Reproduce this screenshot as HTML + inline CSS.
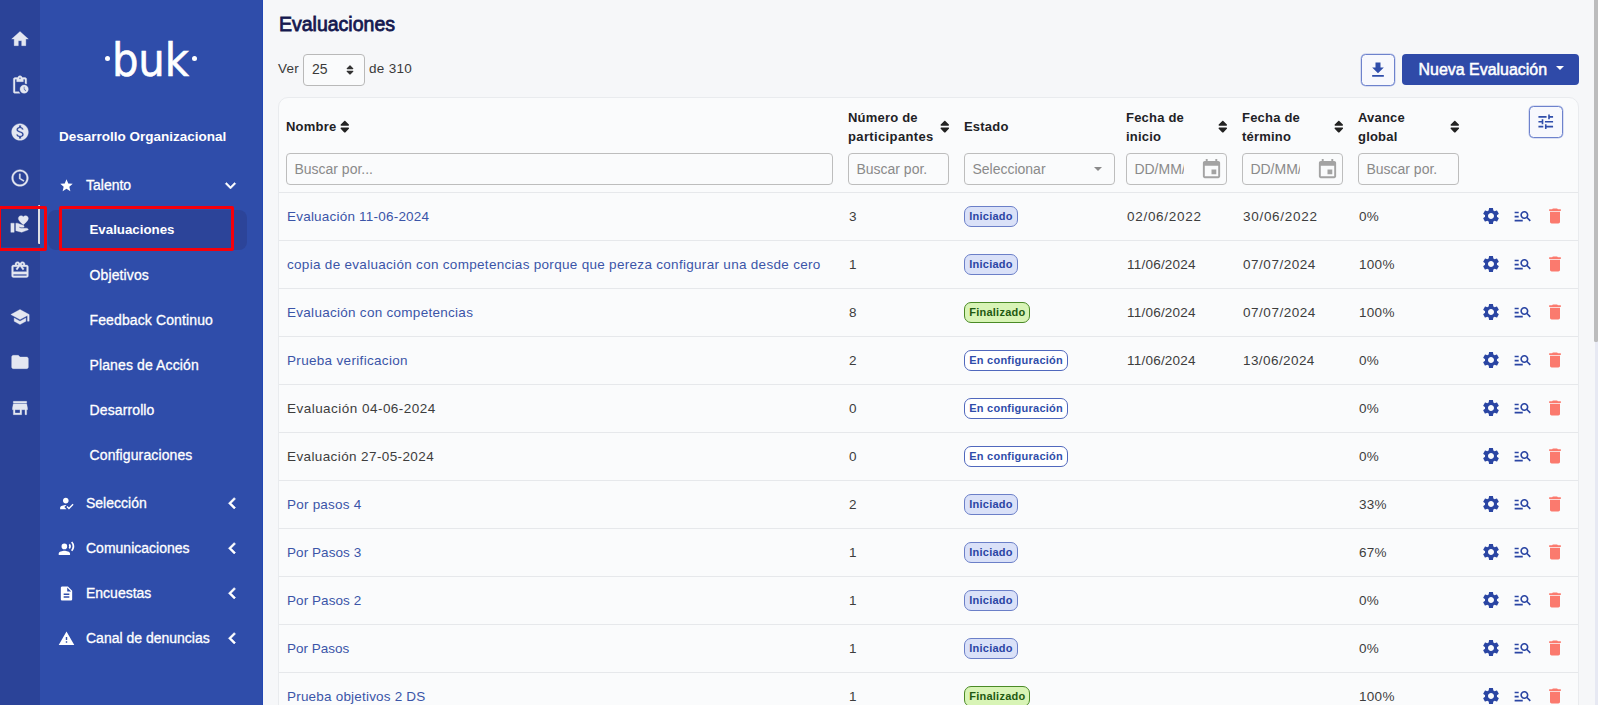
<!DOCTYPE html>
<html lang="es">
<head>
<meta charset="utf-8">
<title>Evaluaciones</title>
<style>
*{box-sizing:border-box;margin:0;padding:0}
html,body{width:1600px;height:705px;overflow:hidden}
body{font-family:"Liberation Sans",sans-serif;background:#f6f7f9;color:#333;position:relative;font-size:13px}
.abs{position:absolute}
#rail{left:0;top:0;width:40px;height:705px;background:#2b4398}
#side{left:40px;top:0;width:223px;height:705px;background:#2f4daa;box-shadow:inset -1px 0 #2347b3}
svg{position:absolute}
#rail svg{fill:#e4e7f1}
.redbox{border:3.4px solid #f6000b;border-radius:2px}
#side .t{position:absolute;color:#fff;white-space:nowrap;font-size:14px;line-height:16px;-webkit-text-stroke:.3px #fff}
#side .s{left:49.5px;letter-spacing:.12px}
#side .m{left:46px}
#side svg{fill:#fff}
.logo{position:absolute;left:64.6px;top:30px;width:92.8px;height:56px;color:#fff}
.logo span{position:absolute;left:7.3px;top:2px;font-family:"DejaVu Sans Condensed","DejaVu Sans","Liberation Sans",sans-serif;font-size:46.5px;line-height:56px;letter-spacing:-.1px;-webkit-text-stroke:.55px #fff}
.logo .dot{position:absolute;top:25.6px;width:5.4px;height:5.4px;border-radius:3px;background:#fff}
#main{left:263px;top:0;width:1337px;height:705px}
h1{position:absolute;left:15.6px;top:11px;font-size:20px;line-height:26px;font-weight:normal;color:#15194f;-webkit-text-stroke:.8px #15194f;letter-spacing:0;white-space:nowrap;transform:scaleX(.975);transform-origin:0 0}
.lbl{font-size:13.5px;letter-spacing:.3px;line-height:16px;color:#3a3a3a;white-space:nowrap}
.sel{border:1px solid #b9b9b9;border-radius:4px;background:#fafbfc}
.sel span{position:absolute;left:8px;top:6px;font-size:14px;line-height:16px;color:#3a3a3a}
.sel svg{left:41.8px;top:9px;width:8px;height:12px}
.btn-o{border:1px solid #6d82cc;border-radius:4.5px;background:#f7f8fd;box-shadow:0 0 0 .5px #b9c3ea}
.btn-p{background:#2f4aa8;border-radius:4px;color:#fff}
.btn-p span{position:absolute;left:16.6px;top:6px;font-size:15.95px;line-height:19px;white-space:nowrap;-webkit-text-stroke:.5px #fff}
.btn-p i{position:absolute;left:153.5px;top:12.5px;width:0;height:0;border-left:4px solid transparent;border-right:4px solid transparent;border-top:4px solid #fff}
.card{position:absolute;left:278px;top:97px;width:1301px;height:640px;background:#fafbfc;border:1px solid #e9ebee;border-radius:10px;overflow:hidden}
.ci{position:absolute;left:1px;top:0;right:0;bottom:0}
.row{position:absolute;left:0;width:1298px;height:47px}
.row::before{content:"";position:absolute;left:-1px;right:0;top:-1px;height:1px;background:#e6e8eb}
.row span,.row a{position:absolute;top:16px;line-height:16px;font-size:13.5px;letter-spacing:.3px;white-space:nowrap;color:#3d3d3d}
.row a{color:#3b55a8;text-decoration:none}
.c1{left:7px}.c2{left:569px}.c3{left:685px}.c4{left:847px}.c5{left:963px}.c6{left:1079px}
.row .bd{left:684.2px;top:13.3px;height:20.6px;line-height:18.7px;font-size:11px;letter-spacing:.25px;font-weight:bold;border:1px solid #6b7fc8;border-radius:7px;padding:0 4px;color:#2b45a4;background:#dae1f8}
.row .bd.fin{background:#d8f4b6;border-color:#4a8a26;color:#1f5a12}
.row .bd.cfg{background:#fff;border-color:#5068bd;color:#2f4daa}
.th{position:absolute;font-weight:bold;font-size:13px;letter-spacing:.2px;line-height:18.5px;color:#1e2226;white-space:nowrap}
.inp{position:absolute;top:55px;height:32px;border:1px solid #bdbdbd;border-radius:4px;background:#fafbfc;color:#8a8a8a;font-size:14px;line-height:30px;padding-left:7.4px;white-space:nowrap;overflow:hidden}
.inp .clip{display:inline-block;width:50px;overflow:hidden;vertical-align:top}
.inp .caret{position:absolute;right:12.5px;top:13px;width:0;height:0;border-left:4px solid transparent;border-right:4px solid transparent;border-top:4px solid #8a8a8a}
.sort{width:9.6px;height:15.3px}
</style>
</head>
<body>
<div id="rail" class="abs">
<div class="abs" style="left:0;top:209px;width:40px;height:38px;background:#273c8b"></div>
<div class="abs" style="left:38px;top:205px;width:2.5px;height:39px;background:#dfe0e4;border-radius:1px"></div>
<svg viewBox="0 0 24 24" style="left:10px;top:28.8px;width:20px;height:20px" stroke="#e4e7f1" stroke-width=".4"><path d="M10 20v-6h4v6h5v-8h3L12 3 2 12h3v8z"/></svg>
<svg viewBox="0 0 24 24" style="left:10px;top:75px;width:20px;height:20px" stroke="#e4e7f1" stroke-width=".4"><path d="M17 12c-2.76 0-5 2.24-5 5s2.24 5 5 5 5-2.24 5-5-2.24-5-5-5zm1.65 7.35L16.5 17.2V14h1v2.79l1.85 1.85-.7.71zM18 3h-3.18C14.4 1.84 13.3 1 12 1s-2.4.84-2.82 2H6c-1.1 0-2 .9-2 2v15c0 1.1.9 2 2 2h6.11c-.59-.57-1.07-1.25-1.42-2H6V5h2v3h8V5h2v5.08c.71.1 1.38.31 2 .6V5c0-1.1-.9-2-2-2zm-6 2c-.55 0-1-.45-1-1s.45-1 1-1 1 .45 1 1-.45 1-1 1z"/></svg>
<svg viewBox="0 0 24 24" style="left:10px;top:121.5px;width:20px;height:20px" stroke="#e4e7f1" stroke-width=".4"><path d="M12 2C6.48 2 2 6.48 2 12s4.48 10 10 10 10-4.48 10-10S17.52 2 12 2zm1.41 16.09V20h-2.67v-1.93c-1.71-.36-3.16-1.46-3.27-3.4h1.96c.1 1.05.82 1.87 2.65 1.87 1.96 0 2.4-.98 2.4-1.59 0-.83-.44-1.61-2.67-2.14-2.48-.6-4.18-1.62-4.18-3.67 0-1.72 1.39-2.84 3.11-3.21V4h2.67v1.95c1.86.45 2.79 1.86 2.85 3.39H14.3c-.05-1.11-.64-1.87-2.22-1.87-1.5 0-2.4.68-2.4 1.64 0 .84.65 1.39 2.67 1.91s4.18 1.39 4.18 3.91c-.01 1.83-1.38 2.83-3.12 3.16z"/></svg>
<svg viewBox="0 0 24 24" style="left:10px;top:168px;width:20px;height:20px" stroke="#e4e7f1" stroke-width=".4"><path d="M11.99 2C6.47 2 2 6.48 2 12s4.47 10 9.99 10C17.52 22 22 17.52 22 12S17.52 2 11.99 2zM12 20c-4.42 0-8-3.58-8-8s3.58-8 8-8 8 3.58 8 8-3.58 8-8 8zm.5-13H11v6l5.25 3.15.75-1.23-4.5-2.67z"/></svg>
<svg viewBox="0 0 24 24" style="left:10px;top:213.9px;width:20px;height:20px" stroke="#e4e7f1" stroke-width=".4"><path d="M1 11h4v11H1zM16 3.25C16.65 2.49 17.66 2 18.7 2 20.55 2 22 3.45 22 5.3c0 2.27-2.91 4.9-6 7.7-3.09-2.81-6-5.44-6-7.7C10 3.45 11.45 2 13.3 2c1.04 0 2.05.49 2.7 1.25zM20 17h-7l-2.09-.73.33-.94L13 16h2.82c.65 0 1.18-.53 1.18-1.18 0-.49-.31-.93-.77-1.11L8.97 11H7v9.02L14 22l8.01-3c-.01-1.1-.9-2-2.01-2z"/></svg>
<svg viewBox="0 0 24 24" style="left:10px;top:260.4px;width:20px;height:20px" stroke="#e4e7f1" stroke-width=".4"><path d="M20 6h-2.18c.11-.31.18-.65.18-1 0-1.66-1.34-3-3-3-1.05 0-1.96.54-2.5 1.35l-.5.67-.5-.68C10.96 2.54 10.05 2 9 2 7.34 2 6 3.34 6 5c0 .35.07.69.18 1H4c-1.11 0-1.99.89-1.99 2L2 19c0 1.11.89 2 2 2h16c1.11 0 2-.89 2-2V8c0-1.11-.89-2-2-2zm-5-2c.55 0 1 .45 1 1s-.45 1-1 1-1-.45-1-1 .45-1 1-1zM9 4c.55 0 1 .45 1 1s-.45 1-1 1-1-.45-1-1 .45-1 1-1zm11 15H4v-2h16v2zm0-5H4V8h5.08L7 10.83 8.62 12 11 8.76l1-1.36 1 1.36L15.38 12 17 10.83 14.92 8H20v6z"/></svg>
<svg viewBox="0 0 24 24" style="left:10px;top:306.7px;width:20px;height:20px" stroke="#e4e7f1" stroke-width=".4"><path d="M5 13.18v4L12 21l7-3.82v-4L12 17l-7-3.82zM12 3L1 9l11 6 9-4.91V17h2V9L12 3z"/></svg>
<svg viewBox="0 0 24 24" style="left:10px;top:352.1px;width:20px;height:20px" stroke="#e4e7f1" stroke-width=".4"><path d="M10 4H4c-1.1 0-1.99.9-1.99 2L2 18c0 1.1.9 2 2 2h16c1.1 0 2-.9 2-2V8c0-1.1-.9-2-2-2h-8l-2-2z"/></svg>
<svg viewBox="0 0 24 24" style="left:10px;top:398px;width:20px;height:20px" stroke="#e4e7f1" stroke-width=".4"><path d="M20 4H4v2h16V4zm1 10v-2l-1-5H4l-1 5v2h1v6h10v-6h4v6h2v-6h1zm-9 4H6v-4h6v4z"/></svg>
</div>
<div id="side" class="abs">
<div class="abs" style="left:8px;top:210px;width:199px;height:40px;background:#2c4499;border-radius:8px"></div>
<div class="logo"><i class="dot" style="left:0"></i><span>buk</span><i class="dot" style="right:0"></i></div>
<div class="t" style="left:19px;top:128.7px;font-weight:bold;font-size:13.5px;-webkit-text-stroke:0">Desarrollo Organizacional</div>
<svg viewBox="0 0 24 24" style="left:19.3px;top:178.3px;width:15px;height:15px"><path d="M12 17.27L18.18 21l-1.64-7.03L22 9.24l-7.19-.61L12 2 9.19 8.63 2 9.24l5.46 4.73L5.82 21z"/></svg>
<div class="t m" style="top:177px">Talento</div>
<svg viewBox="0 0 24 24" style="left:180.4px;top:174.6px;width:21px;height:21px" stroke="#fff" stroke-width=".5"><path d="M16.59 8.59L12 13.17 7.41 8.59 6 10l6 6 6-6z"/></svg>
<div class="t s" style="top:221.8px;font-weight:bold;font-size:13.3px;letter-spacing:0;-webkit-text-stroke:0">Evaluaciones</div>
<div class="t s" style="top:266.8px">Objetivos</div>
<div class="t s" style="top:311.8px">Feedback Continuo</div>
<div class="t s" style="top:356.8px">Planes de Acción</div>
<div class="t s" style="top:401.8px">Desarrollo</div>
<div class="t s" style="top:446.8px">Configuraciones</div>
<svg viewBox="0 0 24 24" style="left:18px;top:494.5px;width:17px;height:17px"><path d="M9 17l3-2.94c-.39-.04-.68-.06-1-.06-2.67 0-8 1.34-8 4v2h9l-3-3zm2-5c2.21 0 4-1.79 4-4s-1.790-4-4-4-4 1.79-4 4 1.79 4 4 4m4.47 8.5L12 17l1.4-1.41 2.07 2.080 5.130-5.170 1.400 1.410-6.530 6.590z"/></svg>
<div class="t m" style="top:495px">Selección</div>
<svg viewBox="0 0 24 24" style="left:180.7px;top:491.75px;width:22.5px;height:22.5px" stroke="#fff" stroke-width=".7"><path d="M15.41 7.41L14 6l-6 6 6 6 1.41-1.41L10.83 12z"/></svg>
<svg viewBox="0 0 24 24" style="left:18px;top:539.5px;width:17px;height:17px"><path d="M5 9a4 4 0 1 0 8 0a4 4 0 1 0 -8 0M9 15c-2.67 0-8 1.34-8 4v2h16v-2c0-2.66-5.33-4-8-4zm7.760-9.640l-1.680 1.690c.84 1.180.84 2.710 0 3.890l1.680 1.690c2.020-2.020 2.020-5.070 0-7.270zM20.070 2l-1.630 1.630c2.770 3.020 2.770 7.560 0 10.740L20.070 16c3.900-3.890 3.910-9.950 0-14z"/></svg>
<div class="t m" style="top:540px">Comunicaciones</div>
<svg viewBox="0 0 24 24" style="left:180.7px;top:536.75px;width:22.5px;height:22.5px" stroke="#fff" stroke-width=".7"><path d="M15.41 7.41L14 6l-6 6 6 6 1.41-1.41L10.83 12z"/></svg>
<svg viewBox="0 0 24 24" style="left:18px;top:584.5px;width:17px;height:17px"><path d="M14 2H6c-1.1 0-1.99.9-1.99 2L4 20c0 1.1.89 2 1.990 2H18c1.1 0 2-.9 2-2V8l-6-6zm2 16H8v-2h8v2zm0-4H8v-2h8v2zm-3-5V3.5L18.5 9H13z"/></svg>
<div class="t m" style="top:585px">Encuestas</div>
<svg viewBox="0 0 24 24" style="left:180.7px;top:581.75px;width:22.5px;height:22.5px" stroke="#fff" stroke-width=".7"><path d="M15.41 7.41L14 6l-6 6 6 6 1.41-1.41L10.83 12z"/></svg>
<svg viewBox="0 0 24 24" style="left:18px;top:629.5px;width:17px;height:17px"><path d="M1 21h22L12 2 1 21zm12-3h-2v-2h2v2zm0-4h-2v-4h2v4z"/></svg>
<div class="t m" style="top:630px">Canal de denuncias</div>
<svg viewBox="0 0 24 24" style="left:180.7px;top:626.75px;width:22.5px;height:22.5px" stroke="#fff" stroke-width=".7"><path d="M15.41 7.41L14 6l-6 6 6 6 1.41-1.41L10.83 12z"/></svg>
</div>
<div class="abs redbox" style="left:-2.2px;top:205.7px;width:48.8px;height:45px"></div>
<div class="abs redbox" style="left:59.4px;top:205.8px;width:174.8px;height:45px"></div>
<div id="main" class="abs">
<h1>Evaluaciones</h1>
<div class="abs lbl" style="left:15px;top:61px">Ver</div>
<div class="abs sel" style="left:40px;top:54px;width:62px;height:32px"><span>25</span><svg viewBox="0 0 320 512" fill="#333"><path d="M41 288h238c21.4 0 32.1 25.9 17 41L177 448c-9.4 9.4-24.6 9.4-33.900 0L24 329c-15.1-15.1-4.4-41 17-41zm255-105L177 64c-9.4-9.4-24.6-9.400-33.900 0L24 183c-15.100 15.100-4.400 41 17 41h238c21.400 0 32.100-25.900 17-41z"/></svg></div>
<div class="abs lbl" style="left:106px;top:61px">de 310</div>
<div class="abs btn-o" style="left:1098px;top:54px;width:34px;height:32px"><svg viewBox="0 0 24 24" style="left:6.3px;top:4.5px;width:20px;height:20px" fill="#2f4daa"><path d="M19 9h-4V3H9v6H5l7 7 7-7zM5 18v2h14v-2H5z"/></svg></div>
<div class="abs btn-p" style="left:1139px;top:53.6px;width:177px;height:31.5px"><span>Nueva Evaluación</span><i></i></div>
</div>
<div class="card" id="card"><div class="ci">
<div class="th" style="left:6px;top:20px">Nombre</div><svg class="sort" viewBox="0 0 320 512" style="left:60.3px;top:21.05px" fill="#222"><path d="M41 288h238c21.4 0 32.1 25.9 17 41L177 448c-9.4 9.4-24.6 9.4-33.900 0L24 329c-15.1-15.1-4.4-41 17-41zm255-105L177 64c-9.4-9.4-24.6-9.400-33.900 0L24 183c-15.100 15.100-4.400 41 17 41h238c21.400 0 32.100-25.900 17-41z"/></svg>
<div class="th" style="left:568px;top:11px">Número de<br><span style="letter-spacing:.37px">participantes</span></div><svg class="sort" viewBox="0 0 320 512" style="left:659.8px;top:20.85px" fill="#222"><path d="M41 288h238c21.4 0 32.1 25.9 17 41L177 448c-9.4 9.4-24.6 9.4-33.900 0L24 329c-15.1-15.1-4.4-41 17-41zm255-105L177 64c-9.4-9.4-24.6-9.400-33.900 0L24 183c-15.100 15.100-4.400 41 17 41h238c21.400 0 32.100-25.900 17-41z"/></svg>
<div class="th" style="left:684px;top:20px">Estado</div>
<div class="th" style="left:846px;top:11px">Fecha de<br>inicio</div><svg class="sort" viewBox="0 0 320 512" style="left:938.1px;top:20.85px" fill="#222"><path d="M41 288h238c21.4 0 32.1 25.9 17 41L177 448c-9.4 9.4-24.6 9.4-33.900 0L24 329c-15.1-15.1-4.4-41 17-41zm255-105L177 64c-9.4-9.4-24.6-9.400-33.900 0L24 183c-15.100 15.100-4.400 41 17 41h238c21.400 0 32.100-25.900 17-41z"/></svg>
<div class="th" style="left:962px;top:11px">Fecha de<br>término</div><svg class="sort" viewBox="0 0 320 512" style="left:1053.7px;top:20.85px" fill="#222"><path d="M41 288h238c21.4 0 32.1 25.9 17 41L177 448c-9.4 9.4-24.6 9.4-33.900 0L24 329c-15.1-15.1-4.4-41 17-41zm255-105L177 64c-9.4-9.4-24.6-9.400-33.900 0L24 183c-15.100 15.100-4.400 41 17 41h238c21.400 0 32.100-25.900 17-41z"/></svg>
<div class="th" style="left:1078px;top:11px">Avance<br>global</div><svg class="sort" viewBox="0 0 320 512" style="left:1169.8px;top:20.85px" fill="#222"><path d="M41 288h238c21.4 0 32.1 25.9 17 41L177 448c-9.4 9.4-24.6 9.4-33.900 0L24 329c-15.1-15.1-4.4-41 17-41zm255-105L177 64c-9.4-9.4-24.6-9.400-33.900 0L24 183c-15.100 15.100-4.400 41 17 41h238c21.400 0 32.100-25.900 17-41z"/></svg>
<div class="abs btn-o" style="left:1249px;top:8px;width:34px;height:32px"><svg viewBox="0 0 24 24" style="left:5.9px;top:4.7px;width:19.5px;height:19.5px" fill="#2f4daa"><path d="M3 17v2h6v-2H3zM3 5v2h10V5H3zm10 16v-2h8v-2h-8v-2h-2v6h2zM7 9v2H3v2h4v2h2V9H7zm14 4v-2H11v2h10zm-6-4h2V7h4V5h-4V3h-2v6z"/></svg></div>
<div class="inp" style="left:6px;width:547px">Buscar por...</div>
<div class="inp" style="left:568px;width:101px">Buscar por.</div>
<div class="inp" style="left:684px;width:151px">Seleccionar<i class="caret"></i></div>
<div class="inp" style="left:846px;width:101px"><span class="clip">DD/MM/AAAA</span><svg viewBox="0 0 24 24" style="left:72.8px;top:3.6px;width:23px;height:23px" fill="#a3a3a3"><path d="M17 12h-5v5h5v-5zM16 1v2H8V1H6v2H5c-1.11 0-1.99.9-1.99 2L3 19c0 1.1.89 2 2 2h14c1.1 0 2-.9 2-2V5c0-1.1-.9-2-2-2h-1V1h-2zm3 18H5V8h14v11z"/></svg></div>
<div class="inp" style="left:962px;width:101px"><span class="clip">DD/MM/AAAA</span><svg viewBox="0 0 24 24" style="left:72.8px;top:3.6px;width:23px;height:23px" fill="#a3a3a3"><path d="M17 12h-5v5h5v-5zM16 1v2H8V1H6v2H5c-1.11 0-1.99.9-1.99 2L3 19c0 1.1.89 2 2 2h14c1.1 0 2-.9 2-2V5c0-1.1-.9-2-2-2h-1V1h-2zm3 18H5V8h14v11z"/></svg></div>
<div class="inp" style="left:1078px;width:101px">Buscar por.</div>
<div class="row" style="top:95px"><a class="c1" style="letter-spacing:0.21px">Evaluación 11-06-2024</a><span class="c2">3</span><span class="c3 bd ini">Iniciado</span><span class="c4" style="letter-spacing:0.71px">02/06/2022</span><span class="c5" style="letter-spacing:0.71px">30/06/2022</span><span class="c6">0%</span><svg viewBox="0 0 24 24" style="left:1201.2px;top:13px;width:20px;height:20px" fill="#2a45a3"><path d="M19.14 12.94c.04-.3.06-.61.06-.94 0-.32-.02-.64-.07-.94l2.030-1.580c.18-.14.23-.41.12-.61l-1.920-3.320c-.12-.22-.37-.29-.59-.22l-2.390.96c-.5-.38-1.030-.7-1.620-.94l-.36-2.540c-.04-.24-.24-.41-.48-.41h-3.840c-.24 0-.43.17-.47.41l-.36 2.540c-.59.24-1.130.57-1.620.94l-2.390-.96c-.22-.08-.47 0-.59.22L2.740 8.870c-.12.21-.08.47.12.61l2.030 1.580c-.05.3-.09.63-.09.94s.02.64.07.94l-2.030 1.580c-.18.14-.23.41-.12.61l1.920 3.320c.12.22.37.29.59.22l2.390-.96c.5.38 1.030.7 1.620.94l.36 2.540c.05.24.24.41.48.41h3.840c.24 0 .44-.17.47-.41l.36-2.540c.59-.24 1.130-.56 1.620-.94l2.390.96c.22.08.47 0 .59-.22l1.920-3.320c.12-.22.07-.47-.12-.61l-2.010-1.580zM12 15.600c-1.980 0-3.600-1.620-3.600-3.600s1.620-3.600 3.600-3.600 3.600 1.620 3.600 3.600-1.620 3.600-3.600 3.600z"/></svg><svg viewBox="0 0 24 24" style="left:1233.1px;top:13.4px;width:19.5px;height:19.5px" fill="#2a45a3"><path d="M7 9H2V7h5v2zm0 3H2v2h5v-2zm13.590 7l-3.830-3.830c-.8.520-1.740.83-2.760.83-2.760 0-5-2.240-5-5s2.240-5 5-5 5 2.240 5 5c0 1.020-.31 1.960-.83 2.750L22 17.590 20.590 19zM17 11c0-1.650-1.350-3-3-3s-3 1.350-3 3 1.350 3 3 3 3-1.350 3-3zM2 19h10v-2H2v2z"/></svg><svg viewBox="0 0 24 24" style="left:1265px;top:13.2px;width:20px;height:20px" fill="#fb7a6e"><path d="M6 19c0 1.1.9 2 2 2h8c1.1 0 2-.9 2-2V7H6v12zM19 4h-3.5l-1-1h-5l-1 1H5v2h14V4z"/></svg></div>
<div class="row" style="top:143px"><a class="c1">copia de evaluación con competencias porque que pereza configurar una desde cero</a><span class="c2">1</span><span class="c3 bd ini">Iniciado</span><span class="c4" style="letter-spacing:0.22px">11/06/2024</span><span class="c5" style="letter-spacing:0.53px">07/07/2024</span><span class="c6">100%</span><svg viewBox="0 0 24 24" style="left:1201.2px;top:13px;width:20px;height:20px" fill="#2a45a3"><path d="M19.14 12.94c.04-.3.06-.61.06-.94 0-.32-.02-.64-.07-.94l2.030-1.580c.18-.14.23-.41.12-.61l-1.920-3.320c-.12-.22-.37-.29-.59-.22l-2.390.96c-.5-.38-1.030-.7-1.620-.94l-.36-2.540c-.04-.24-.24-.41-.48-.41h-3.840c-.24 0-.43.17-.47.41l-.36 2.540c-.59.24-1.130.57-1.620.94l-2.390-.96c-.22-.08-.47 0-.59.22L2.740 8.870c-.12.21-.08.47.12.61l2.030 1.580c-.05.3-.09.63-.09.94s.02.64.07.94l-2.030 1.580c-.18.14-.23.41-.12.61l1.920 3.320c.12.22.37.29.59.22l2.390-.96c.5.38 1.030.7 1.620.94l.36 2.540c.05.24.24.41.48.41h3.840c.24 0 .44-.17.47-.41l.36-2.540c.59-.24 1.130-.56 1.620-.94l2.390.96c.22.08.47 0 .59-.22l1.920-3.320c.12-.22.07-.47-.12-.61l-2.010-1.580zM12 15.600c-1.980 0-3.600-1.620-3.600-3.600s1.620-3.600 3.600-3.600 3.600 1.620 3.600 3.600-1.620 3.600-3.600 3.600z"/></svg><svg viewBox="0 0 24 24" style="left:1233.1px;top:13.4px;width:19.5px;height:19.5px" fill="#2a45a3"><path d="M7 9H2V7h5v2zm0 3H2v2h5v-2zm13.590 7l-3.830-3.830c-.8.520-1.740.83-2.760.83-2.760 0-5-2.240-5-5s2.240-5 5-5 5 2.240 5 5c0 1.020-.31 1.960-.83 2.750L22 17.590 20.590 19zM17 11c0-1.650-1.350-3-3-3s-3 1.350-3 3 1.350 3 3 3 3-1.350 3-3zM2 19h10v-2H2v2z"/></svg><svg viewBox="0 0 24 24" style="left:1265px;top:13.2px;width:20px;height:20px" fill="#fb7a6e"><path d="M6 19c0 1.1.9 2 2 2h8c1.1 0 2-.9 2-2V7H6v12zM19 4h-3.5l-1-1h-5l-1 1H5v2h14V4z"/></svg></div>
<div class="row" style="top:191px"><a class="c1" style="letter-spacing:0.28px">Evaluación con competencias</a><span class="c2">8</span><span class="c3 bd fin">Finalizado</span><span class="c4" style="letter-spacing:0.22px">11/06/2024</span><span class="c5" style="letter-spacing:0.53px">07/07/2024</span><span class="c6">100%</span><svg viewBox="0 0 24 24" style="left:1201.2px;top:13px;width:20px;height:20px" fill="#2a45a3"><path d="M19.14 12.94c.04-.3.06-.61.06-.94 0-.32-.02-.64-.07-.94l2.030-1.580c.18-.14.23-.41.12-.61l-1.920-3.320c-.12-.22-.37-.29-.59-.22l-2.390.96c-.5-.38-1.030-.7-1.620-.94l-.36-2.540c-.04-.24-.24-.41-.48-.41h-3.840c-.24 0-.43.17-.47.41l-.36 2.540c-.59.24-1.130.57-1.620.94l-2.390-.96c-.22-.08-.47 0-.59.22L2.740 8.870c-.12.21-.08.47.12.61l2.030 1.580c-.05.3-.09.63-.09.94s.02.64.07.94l-2.030 1.580c-.18.14-.23.41-.12.61l1.920 3.320c.12.22.37.29.59.22l2.390-.96c.5.38 1.030.7 1.620.94l.36 2.540c.05.24.24.41.48.41h3.840c.24 0 .44-.17.47-.41l.36-2.540c.59-.24 1.130-.56 1.620-.94l2.390.96c.22.08.47 0 .59-.22l1.920-3.320c.12-.22.07-.47-.12-.61l-2.010-1.580zM12 15.600c-1.980 0-3.600-1.620-3.600-3.600s1.620-3.600 3.600-3.600 3.600 1.620 3.600 3.600-1.620 3.600-3.600 3.600z"/></svg><svg viewBox="0 0 24 24" style="left:1233.1px;top:13.4px;width:19.5px;height:19.5px" fill="#2a45a3"><path d="M7 9H2V7h5v2zm0 3H2v2h5v-2zm13.590 7l-3.830-3.830c-.8.520-1.740.83-2.760.83-2.760 0-5-2.240-5-5s2.240-5 5-5 5 2.240 5 5c0 1.020-.31 1.960-.83 2.750L22 17.590 20.590 19zM17 11c0-1.650-1.350-3-3-3s-3 1.350-3 3 1.350 3 3 3 3-1.350 3-3zM2 19h10v-2H2v2z"/></svg><svg viewBox="0 0 24 24" style="left:1265px;top:13.2px;width:20px;height:20px" fill="#fb7a6e"><path d="M6 19c0 1.1.9 2 2 2h8c1.1 0 2-.9 2-2V7H6v12zM19 4h-3.5l-1-1h-5l-1 1H5v2h14V4z"/></svg></div>
<div class="row" style="top:239px"><a class="c1" style="letter-spacing:0.32px">Prueba verificacion</a><span class="c2">2</span><span class="c3 bd cfg">En configuración</span><span class="c4" style="letter-spacing:0.22px">11/06/2024</span><span class="c5" style="letter-spacing:0.42px">13/06/2024</span><span class="c6">0%</span><svg viewBox="0 0 24 24" style="left:1201.2px;top:13px;width:20px;height:20px" fill="#2a45a3"><path d="M19.14 12.94c.04-.3.06-.61.06-.94 0-.32-.02-.64-.07-.94l2.030-1.580c.18-.14.23-.41.12-.61l-1.920-3.320c-.12-.22-.37-.29-.59-.22l-2.390.96c-.5-.38-1.030-.7-1.620-.94l-.36-2.540c-.04-.24-.24-.41-.48-.41h-3.840c-.24 0-.43.17-.47.41l-.36 2.540c-.59.24-1.130.57-1.620.94l-2.390-.96c-.22-.08-.47 0-.59.22L2.740 8.870c-.12.21-.08.47.12.61l2.030 1.580c-.05.3-.09.63-.09.94s.02.64.07.94l-2.030 1.580c-.18.14-.23.41-.12.61l1.920 3.320c.12.22.37.29.59.22l2.390-.96c.5.38 1.030.7 1.620.94l.36 2.540c.05.24.24.41.48.41h3.840c.24 0 .44-.17.47-.41l.36-2.540c.59-.24 1.130-.56 1.620-.94l2.390.96c.22.08.47 0 .59-.22l1.920-3.320c.12-.22.07-.47-.12-.61l-2.010-1.580zM12 15.600c-1.980 0-3.600-1.620-3.600-3.600s1.620-3.600 3.600-3.600 3.600 1.620 3.600 3.600-1.620 3.600-3.600 3.600z"/></svg><svg viewBox="0 0 24 24" style="left:1233.1px;top:13.4px;width:19.5px;height:19.5px" fill="#2a45a3"><path d="M7 9H2V7h5v2zm0 3H2v2h5v-2zm13.590 7l-3.830-3.830c-.8.520-1.740.83-2.760.83-2.760 0-5-2.240-5-5s2.240-5 5-5 5 2.240 5 5c0 1.020-.31 1.960-.83 2.750L22 17.590 20.590 19zM17 11c0-1.650-1.350-3-3-3s-3 1.350-3 3 1.350 3 3 3 3-1.350 3-3zM2 19h10v-2H2v2z"/></svg><svg viewBox="0 0 24 24" style="left:1265px;top:13.2px;width:20px;height:20px" fill="#fb7a6e"><path d="M6 19c0 1.1.9 2 2 2h8c1.1 0 2-.9 2-2V7H6v12zM19 4h-3.5l-1-1h-5l-1 1H5v2h14V4z"/></svg></div>
<div class="row" style="top:287px"><span class="c1" style="letter-spacing:0.47px">Evaluación 04-06-2024</span><span class="c2">0</span><span class="c3 bd cfg">En configuración</span><span class="c6">0%</span><svg viewBox="0 0 24 24" style="left:1201.2px;top:13px;width:20px;height:20px" fill="#2a45a3"><path d="M19.14 12.94c.04-.3.06-.61.06-.94 0-.32-.02-.64-.07-.94l2.030-1.580c.18-.14.23-.41.12-.61l-1.920-3.320c-.12-.22-.37-.29-.59-.22l-2.390.96c-.5-.38-1.030-.7-1.620-.94l-.36-2.540c-.04-.24-.24-.41-.48-.41h-3.840c-.24 0-.43.17-.47.41l-.36 2.540c-.59.24-1.130.57-1.620.94l-2.390-.96c-.22-.08-.47 0-.59.22L2.740 8.870c-.12.21-.08.47.12.61l2.030 1.580c-.05.3-.09.63-.09.94s.02.64.07.94l-2.030 1.580c-.18.14-.23.41-.12.61l1.920 3.320c.12.22.37.29.59.22l2.390-.96c.5.38 1.030.7 1.620.94l.36 2.540c.05.24.24.41.48.41h3.840c.24 0 .44-.17.47-.41l.36-2.540c.59-.24 1.130-.56 1.620-.94l2.390.96c.22.08.47 0 .59-.22l1.920-3.320c.12-.22.07-.47-.12-.61l-2.010-1.580zM12 15.600c-1.980 0-3.600-1.620-3.600-3.600s1.620-3.600 3.600-3.600 3.600 1.620 3.600 3.600-1.620 3.600-3.600 3.600z"/></svg><svg viewBox="0 0 24 24" style="left:1233.1px;top:13.4px;width:19.5px;height:19.5px" fill="#2a45a3"><path d="M7 9H2V7h5v2zm0 3H2v2h5v-2zm13.590 7l-3.830-3.830c-.8.520-1.740.83-2.760.83-2.760 0-5-2.240-5-5s2.240-5 5-5 5 2.240 5 5c0 1.020-.31 1.960-.83 2.750L22 17.590 20.590 19zM17 11c0-1.650-1.350-3-3-3s-3 1.350-3 3 1.350 3 3 3 3-1.350 3-3zM2 19h10v-2H2v2z"/></svg><svg viewBox="0 0 24 24" style="left:1265px;top:13.2px;width:20px;height:20px" fill="#fb7a6e"><path d="M6 19c0 1.1.9 2 2 2h8c1.1 0 2-.9 2-2V7H6v12zM19 4h-3.5l-1-1h-5l-1 1H5v2h14V4z"/></svg></div>
<div class="row" style="top:335px"><span class="c1" style="letter-spacing:0.39px">Evaluación 27-05-2024</span><span class="c2">0</span><span class="c3 bd cfg">En configuración</span><span class="c6">0%</span><svg viewBox="0 0 24 24" style="left:1201.2px;top:13px;width:20px;height:20px" fill="#2a45a3"><path d="M19.14 12.94c.04-.3.06-.61.06-.94 0-.32-.02-.64-.07-.94l2.030-1.580c.18-.14.23-.41.12-.61l-1.920-3.320c-.12-.22-.37-.29-.59-.22l-2.390.96c-.5-.38-1.030-.7-1.620-.94l-.36-2.540c-.04-.24-.24-.41-.48-.41h-3.840c-.24 0-.43.17-.47.41l-.36 2.540c-.59.24-1.130.57-1.620.94l-2.390-.96c-.22-.08-.47 0-.59.22L2.740 8.870c-.12.21-.08.47.12.61l2.030 1.580c-.05.3-.09.63-.09.94s.02.64.07.94l-2.030 1.580c-.18.14-.23.41-.12.61l1.920 3.320c.12.22.37.29.59.22l2.390-.96c.5.38 1.030.7 1.620.94l.36 2.540c.05.24.24.41.48.41h3.840c.24 0 .44-.17.47-.41l.36-2.540c.59-.24 1.130-.56 1.620-.94l2.390.96c.22.08.47 0 .59-.22l1.920-3.320c.12-.22.07-.47-.12-.61l-2.010-1.580zM12 15.600c-1.980 0-3.600-1.620-3.600-3.600s1.620-3.600 3.600-3.600 3.600 1.620 3.600 3.600-1.620 3.600-3.600 3.600z"/></svg><svg viewBox="0 0 24 24" style="left:1233.1px;top:13.4px;width:19.5px;height:19.5px" fill="#2a45a3"><path d="M7 9H2V7h5v2zm0 3H2v2h5v-2zm13.590 7l-3.830-3.830c-.8.520-1.740.83-2.760.83-2.760 0-5-2.240-5-5s2.240-5 5-5 5 2.240 5 5c0 1.020-.31 1.960-.83 2.750L22 17.590 20.590 19zM17 11c0-1.650-1.350-3-3-3s-3 1.350-3 3 1.350 3 3 3 3-1.350 3-3zM2 19h10v-2H2v2z"/></svg><svg viewBox="0 0 24 24" style="left:1265px;top:13.2px;width:20px;height:20px" fill="#fb7a6e"><path d="M6 19c0 1.1.9 2 2 2h8c1.1 0 2-.9 2-2V7H6v12zM19 4h-3.5l-1-1h-5l-1 1H5v2h14V4z"/></svg></div>
<div class="row" style="top:383px"><a class="c1" style="letter-spacing:0.22px">Por pasos 4</a><span class="c2">2</span><span class="c3 bd ini">Iniciado</span><span class="c6">33%</span><svg viewBox="0 0 24 24" style="left:1201.2px;top:13px;width:20px;height:20px" fill="#2a45a3"><path d="M19.14 12.94c.04-.3.06-.61.06-.94 0-.32-.02-.64-.07-.94l2.030-1.580c.18-.14.23-.41.12-.61l-1.920-3.320c-.12-.22-.37-.29-.59-.22l-2.390.96c-.5-.38-1.030-.7-1.620-.94l-.36-2.540c-.04-.24-.24-.41-.48-.41h-3.840c-.24 0-.43.17-.47.41l-.36 2.540c-.59.24-1.130.57-1.620.94l-2.390-.96c-.22-.08-.47 0-.59.22L2.740 8.870c-.12.21-.08.47.12.61l2.030 1.580c-.05.3-.09.63-.09.94s.02.64.07.94l-2.030 1.580c-.18.14-.23.41-.12.61l1.920 3.320c.12.22.37.29.59.22l2.390-.96c.5.38 1.030.7 1.620.94l.36 2.540c.05.24.24.41.48.41h3.840c.24 0 .44-.17.47-.41l.36-2.540c.59-.24 1.130-.56 1.620-.94l2.390.96c.22.08.47 0 .59-.22l1.920-3.320c.12-.22.07-.47-.12-.61l-2.010-1.580zM12 15.600c-1.980 0-3.600-1.620-3.600-3.600s1.620-3.600 3.600-3.600 3.600 1.620 3.600 3.600-1.620 3.600-3.600 3.600z"/></svg><svg viewBox="0 0 24 24" style="left:1233.1px;top:13.4px;width:19.5px;height:19.5px" fill="#2a45a3"><path d="M7 9H2V7h5v2zm0 3H2v2h5v-2zm13.590 7l-3.830-3.830c-.8.520-1.740.83-2.760.83-2.760 0-5-2.240-5-5s2.240-5 5-5 5 2.240 5 5c0 1.020-.31 1.960-.83 2.750L22 17.590 20.590 19zM17 11c0-1.650-1.350-3-3-3s-3 1.350-3 3 1.350 3 3 3 3-1.350 3-3zM2 19h10v-2H2v2z"/></svg><svg viewBox="0 0 24 24" style="left:1265px;top:13.2px;width:20px;height:20px" fill="#fb7a6e"><path d="M6 19c0 1.1.9 2 2 2h8c1.1 0 2-.9 2-2V7H6v12zM19 4h-3.5l-1-1h-5l-1 1H5v2h14V4z"/></svg></div>
<div class="row" style="top:431px"><a class="c1" style="letter-spacing:0.07px">Por Pasos 3</a><span class="c2">1</span><span class="c3 bd ini">Iniciado</span><span class="c6">67%</span><svg viewBox="0 0 24 24" style="left:1201.2px;top:13px;width:20px;height:20px" fill="#2a45a3"><path d="M19.14 12.94c.04-.3.06-.61.06-.94 0-.32-.02-.64-.07-.94l2.030-1.580c.18-.14.23-.41.12-.61l-1.920-3.320c-.12-.22-.37-.29-.59-.22l-2.390.96c-.5-.38-1.030-.7-1.620-.94l-.36-2.540c-.04-.24-.24-.41-.48-.41h-3.840c-.24 0-.43.17-.47.41l-.36 2.540c-.59.24-1.130.57-1.620.94l-2.390-.96c-.22-.08-.47 0-.59.22L2.740 8.870c-.12.21-.08.47.12.61l2.030 1.580c-.05.3-.09.63-.09.94s.02.64.07.94l-2.030 1.580c-.18.14-.23.41-.12.61l1.920 3.320c.12.22.37.29.59.22l2.390-.96c.5.38 1.030.7 1.620.94l.36 2.540c.05.24.24.41.48.41h3.840c.24 0 .44-.17.47-.41l.36-2.540c.59-.24 1.130-.56 1.620-.94l2.390.96c.22.08.47 0 .59-.22l1.920-3.320c.12-.22.07-.47-.12-.61l-2.010-1.580zM12 15.600c-1.980 0-3.600-1.620-3.600-3.600s1.620-3.600 3.600-3.600 3.600 1.620 3.600 3.600-1.620 3.600-3.600 3.600z"/></svg><svg viewBox="0 0 24 24" style="left:1233.1px;top:13.4px;width:19.5px;height:19.5px" fill="#2a45a3"><path d="M7 9H2V7h5v2zm0 3H2v2h5v-2zm13.590 7l-3.830-3.830c-.8.520-1.740.83-2.760.83-2.760 0-5-2.240-5-5s2.240-5 5-5 5 2.240 5 5c0 1.020-.31 1.960-.83 2.750L22 17.590 20.590 19zM17 11c0-1.650-1.350-3-3-3s-3 1.350-3 3 1.350 3 3 3 3-1.350 3-3zM2 19h10v-2H2v2z"/></svg><svg viewBox="0 0 24 24" style="left:1265px;top:13.2px;width:20px;height:20px" fill="#fb7a6e"><path d="M6 19c0 1.1.9 2 2 2h8c1.1 0 2-.9 2-2V7H6v12zM19 4h-3.5l-1-1h-5l-1 1H5v2h14V4z"/></svg></div>
<div class="row" style="top:479px"><a class="c1" style="letter-spacing:0.07px">Por Pasos 2</a><span class="c2">1</span><span class="c3 bd ini">Iniciado</span><span class="c6">0%</span><svg viewBox="0 0 24 24" style="left:1201.2px;top:13px;width:20px;height:20px" fill="#2a45a3"><path d="M19.14 12.94c.04-.3.06-.61.06-.94 0-.32-.02-.64-.07-.94l2.030-1.580c.18-.14.23-.41.12-.61l-1.920-3.320c-.12-.22-.37-.29-.59-.22l-2.390.96c-.5-.38-1.030-.7-1.620-.94l-.36-2.540c-.04-.24-.24-.41-.48-.41h-3.840c-.24 0-.43.17-.47.41l-.36 2.540c-.59.24-1.130.57-1.620.94l-2.390-.96c-.22-.08-.47 0-.59.22L2.740 8.870c-.12.21-.08.47.12.61l2.030 1.580c-.05.3-.09.63-.09.94s.02.64.07.94l-2.030 1.580c-.18.14-.23.41-.12.61l1.920 3.320c.12.22.37.29.59.22l2.390-.96c.5.38 1.030.7 1.620.94l.36 2.540c.05.24.24.41.48.41h3.840c.24 0 .44-.17.47-.41l.36-2.540c.59-.24 1.130-.56 1.620-.94l2.390.96c.22.08.47 0 .59-.22l1.920-3.320c.12-.22.07-.47-.12-.61l-2.010-1.580zM12 15.600c-1.980 0-3.600-1.620-3.600-3.600s1.620-3.600 3.600-3.600 3.600 1.620 3.600 3.600-1.620 3.600-3.600 3.600z"/></svg><svg viewBox="0 0 24 24" style="left:1233.1px;top:13.4px;width:19.5px;height:19.5px" fill="#2a45a3"><path d="M7 9H2V7h5v2zm0 3H2v2h5v-2zm13.590 7l-3.830-3.830c-.8.520-1.740.83-2.760.83-2.760 0-5-2.240-5-5s2.240-5 5-5 5 2.240 5 5c0 1.020-.31 1.960-.83 2.750L22 17.590 20.590 19zM17 11c0-1.650-1.350-3-3-3s-3 1.350-3 3 1.350 3 3 3 3-1.350 3-3zM2 19h10v-2H2v2z"/></svg><svg viewBox="0 0 24 24" style="left:1265px;top:13.2px;width:20px;height:20px" fill="#fb7a6e"><path d="M6 19c0 1.1.9 2 2 2h8c1.1 0 2-.9 2-2V7H6v12zM19 4h-3.5l-1-1h-5l-1 1H5v2h14V4z"/></svg></div>
<div class="row" style="top:527px"><a class="c1" style="letter-spacing:0.0px">Por Pasos</a><span class="c2">1</span><span class="c3 bd ini">Iniciado</span><span class="c6">0%</span><svg viewBox="0 0 24 24" style="left:1201.2px;top:13px;width:20px;height:20px" fill="#2a45a3"><path d="M19.14 12.94c.04-.3.06-.61.06-.94 0-.32-.02-.64-.07-.94l2.030-1.580c.18-.14.23-.41.12-.61l-1.920-3.320c-.12-.22-.37-.29-.59-.22l-2.390.96c-.5-.38-1.030-.7-1.620-.94l-.36-2.540c-.04-.24-.24-.41-.48-.41h-3.840c-.24 0-.43.17-.47.41l-.36 2.540c-.59.24-1.130.57-1.620.94l-2.390-.96c-.22-.08-.47 0-.59.22L2.740 8.870c-.12.21-.08.47.12.61l2.030 1.580c-.05.3-.09.63-.09.94s.02.64.07.94l-2.030 1.580c-.18.14-.23.41-.12.61l1.920 3.320c.12.22.37.29.59.22l2.390-.96c.5.38 1.030.7 1.620.94l.36 2.540c.05.24.24.41.48.41h3.840c.24 0 .44-.17.47-.41l.36-2.540c.59-.24 1.130-.56 1.620-.94l2.390.96c.22.08.47 0 .59-.22l1.920-3.320c.12-.22.07-.47-.12-.61l-2.010-1.580zM12 15.600c-1.980 0-3.600-1.620-3.600-3.600s1.620-3.600 3.600-3.600 3.600 1.620 3.600 3.600-1.620 3.600-3.600 3.600z"/></svg><svg viewBox="0 0 24 24" style="left:1233.1px;top:13.4px;width:19.5px;height:19.5px" fill="#2a45a3"><path d="M7 9H2V7h5v2zm0 3H2v2h5v-2zm13.590 7l-3.830-3.830c-.8.520-1.740.83-2.760.83-2.760 0-5-2.240-5-5s2.240-5 5-5 5 2.240 5 5c0 1.020-.31 1.960-.83 2.750L22 17.590 20.590 19zM17 11c0-1.650-1.350-3-3-3s-3 1.350-3 3 1.350 3 3 3 3-1.350 3-3zM2 19h10v-2H2v2z"/></svg><svg viewBox="0 0 24 24" style="left:1265px;top:13.2px;width:20px;height:20px" fill="#fb7a6e"><path d="M6 19c0 1.1.9 2 2 2h8c1.1 0 2-.9 2-2V7H6v12zM19 4h-3.5l-1-1h-5l-1 1H5v2h14V4z"/></svg></div>
<div class="row" style="top:575px"><a class="c1" style="letter-spacing:0.2px">Prueba objetivos 2 DS</a><span class="c2">1</span><span class="c3 bd fin">Finalizado</span><span class="c6">100%</span><svg viewBox="0 0 24 24" style="left:1201.2px;top:13px;width:20px;height:20px" fill="#2a45a3"><path d="M19.14 12.94c.04-.3.06-.61.06-.94 0-.32-.02-.64-.07-.94l2.030-1.580c.18-.14.23-.41.12-.61l-1.920-3.320c-.12-.22-.37-.29-.59-.22l-2.390.96c-.5-.38-1.030-.7-1.620-.94l-.36-2.540c-.04-.24-.24-.41-.48-.41h-3.840c-.24 0-.43.17-.47.41l-.36 2.540c-.59.24-1.130.57-1.620.94l-2.390-.96c-.22-.08-.47 0-.59.22L2.740 8.870c-.12.21-.08.47.12.61l2.030 1.580c-.05.3-.09.63-.09.94s.02.64.07.94l-2.030 1.580c-.18.14-.23.41-.12.61l1.920 3.320c.12.22.37.29.59.22l2.390-.96c.5.38 1.030.7 1.620.94l.36 2.540c.05.24.24.41.48.41h3.840c.24 0 .44-.17.47-.41l.36-2.540c.59-.24 1.130-.56 1.620-.94l2.390.96c.22.08.47 0 .59-.22l1.920-3.320c.12-.22.07-.47-.12-.61l-2.010-1.580zM12 15.600c-1.980 0-3.600-1.620-3.600-3.600s1.620-3.600 3.600-3.600 3.600 1.620 3.600 3.600-1.620 3.600-3.600 3.600z"/></svg><svg viewBox="0 0 24 24" style="left:1233.1px;top:13.4px;width:19.5px;height:19.5px" fill="#2a45a3"><path d="M7 9H2V7h5v2zm0 3H2v2h5v-2zm13.590 7l-3.830-3.830c-.8.520-1.740.83-2.760.83-2.760 0-5-2.240-5-5s2.240-5 5-5 5 2.240 5 5c0 1.020-.31 1.960-.83 2.750L22 17.590 20.590 19zM17 11c0-1.650-1.350-3-3-3s-3 1.350-3 3 1.350 3 3 3 3-1.350 3-3zM2 19h10v-2H2v2z"/></svg><svg viewBox="0 0 24 24" style="left:1265px;top:13.2px;width:20px;height:20px" fill="#fb7a6e"><path d="M6 19c0 1.1.9 2 2 2h8c1.1 0 2-.9 2-2V7H6v12zM19 4h-3.5l-1-1h-5l-1 1H5v2h14V4z"/></svg></div>
</div></div>
<div class="abs" style="left:1594.6px;top:0;width:3.4px;height:705px;background:#e7e9f3"></div>
<div class="abs" style="left:1594.3px;top:0;width:3.7px;height:341.6px;background:#bcbcbd;border-radius:0 0 1.5px 1.5px"></div>
<div class="abs" style="left:1598px;top:0;width:2px;height:705px;background:#fff"></div>
</body>
</html>
